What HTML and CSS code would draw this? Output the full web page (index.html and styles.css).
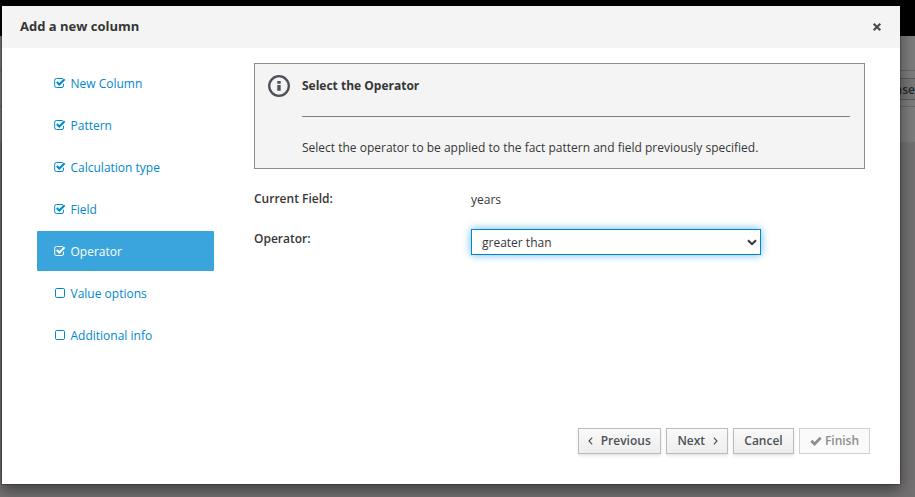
FILE: index.html
```html
<!DOCTYPE html>
<html lang="en">
<head>
<meta charset="utf-8">
<title>Add a new column</title>
<link rel="stylesheet" href="styles.css">
</head>
<body>
<svg class="sprite" aria-hidden="true">
  <symbol id="box-checked" viewBox="0 0 12 12"><path d="M9.500 6.700v2.100q0 1.700-1.500 1.700H2.500Q.7 10.500.7 8.800V3.200Q.7 1.500 2.500 1.500h5.500q.5 0 1 .200" fill="none" stroke="currentColor" stroke-width="1"/><path d="M2.800 5 5.300 7.500 10.600 2.300" fill="none" stroke="currentColor" stroke-width="2"/></symbol>
  <symbol id="box-empty" viewBox="0 0 12 12"><rect x="1.500" y="1.500" width="9" height="9" rx="1.300" fill="none" stroke="currentColor"/></symbol>
</svg>
<div class="page">
  <div class="masthead"></div>
  <div class="toolbar"><div class="toolbar-row"><span class="toolbar-button">nse</span></div></div>
</div>
<section class="modal" role="dialog">
  <header class="modal-header">
    <h4>Add a new column</h4>
    <svg class="close" viewBox="0 0 10 10"><path d="M1.700 1.700 8.300 8.300M8.300 1.700 1.700 8.300" stroke="currentColor" stroke-width="2.200"/></svg>
  </header>
  <div class="modal-body">
    <nav class="steps">
      <a><svg><use href="#box-checked"/></svg>New Column</a>
      <a><svg><use href="#box-checked"/></svg>Pattern</a>
      <a><svg><use href="#box-checked"/></svg>Calculation type</a>
      <a><svg><use href="#box-checked"/></svg>Field</a>
      <a class="active"><svg><use href="#box-checked"/></svg>Operator</a>
      <a><svg><use href="#box-empty"/></svg>Value options</a>
      <a><svg><use href="#box-empty"/></svg>Additional info</a>
    </nav>
    <main class="content">
      <div class="info">
        <svg class="info-icon" viewBox="0 0 22 22"><circle cx="11" cy="11" r="9.800" fill="none" stroke="currentColor" stroke-width="2.300"/><path d="M9.300 6h3.400v2.800H9.300zM9.300 10h3.400v5.800H9.300z" fill="currentColor"/></svg>
        <div class="info-text">
          <strong>Select the Operator</strong>
          <hr>
          <p>Select the operator to be applied to the fact pattern and field previously specified.</p>
        </div>
      </div>
      <div class="row current"><label>Current Field:</label><span>years</span></div>
      <div class="row"><label>Operator:</label>
        <div class="select"><span>greater than</span><svg viewBox="0 0 10 7"><path d="M1 1.300 5 5.200 9 1.300" fill="none" stroke="currentColor" stroke-width="2"/></svg></div>
      </div>
    </main>
  </div>
  <footer class="modal-footer">
    <button class="previous"><svg class="angle" viewBox="0 0 5 8"><path d="M4.200.7 1 4 4.200 7.300" fill="none" stroke="currentColor" stroke-width="1.200"/></svg>Previous</button>
    <button class="next">Next<svg class="angle" viewBox="0 0 5 8"><path d="M.8.7 4 4 .8 7.300" fill="none" stroke="currentColor" stroke-width="1.200"/></svg></button>
    <button class="cancel">Cancel</button>
    <button class="finish" disabled><svg class="check" viewBox="0 0 12 10"><path d="M1.300 4.800 4.500 8 10.700 1.700" fill="none" stroke="currentColor" stroke-width="2.700"/></svg>Finish</button>
  </footer>
</section>
</body>
</html>
```
FILE: styles.css
```css
* { box-sizing: border-box; }
body {
  margin: 0;
  height: 497px;
  overflow: hidden;
  background: #737171;
  color: #363636;
  font: 12px/20px "Open Sans", sans-serif;
}
.sprite { position: absolute; width: 0; height: 0; }
.masthead { height: 36px; background: #000; }
.toolbar { height: 106px; padding-top: 34px; background: #7d7d7d; }
.toolbar-row {
  display: flex;
  justify-content: flex-end;
  height: 37px;
  padding-top: 7px;
  border-top: 1px solid #686868;
  border-bottom: 1px solid #686868;
}
.toolbar-button {
  height: 22px;
  padding-left: 12px;
  border: 1px solid #5b5b5b;
  border-right: 0;
  background: #777;
  color: #262829;
  font-weight: 600;
  line-height: 22px;
}
.modal {
  position: absolute;
  left: 2px;
  top: 6px;
  width: 898px;
  height: 478px;
  display: flex;
  flex-direction: column;
  background: #fff;
  box-shadow: 0 0 0 1px rgba(0, 0, 0, .2), 0 5px 15px rgba(0, 0, 0, .5);
}
.modal-header {
  display: flex;
  align-items: center;
  justify-content: space-between;
  height: 42px;
  padding: 0 18px;
  background: #f4f4f4;
}
h4 { margin: 0; padding-bottom: 2px; font-size: 13px; font-weight: 700; }
.close { width: 10px; height: 10px; color: #4d4d4d; }
.modal-body { display: flex; flex: 1; padding: 15px 35px 0; }
.steps { display: flex; flex-direction: column; gap: 2px; width: 177px; margin-right: 40px; }
.steps a {
  display: flex;
  align-items: center;
  height: 40px;
  padding: 2px 0 0 17px;
  border-radius: 1px;
  color: #0088ce;
}
.steps svg { width: 12px; height: 12px; margin: 0 4.500px 2px 0; }
.steps .active { background: #39a5dc; color: #fff; }
.content { width: 611px; }
.info {
  display: flex;
  height: 106px;
  padding: 11px 14px 0 13px;
  border: 1px solid #8b8d8f;
  background: #f4f4f4;
}
.info-icon { width: 22px; height: 22px; margin-right: 12px; color: #4d5258; }
.info-text { flex: 1; padding-top: 1px; }
.info strong { display: block; font-weight: 700; }
hr { height: 1px; margin: 20px 0 21px; border: 0; background: #7d7d7d; }
p { margin: 0; }
.row { display: flex; }
.row label { width: 217px; font-weight: 600; }
.current { height: 40px; margin-top: 20px; }
.current span { padding-top: 1px; }
.select {
  display: flex;
  align-items: center;
  justify-content: space-between;
  width: 290px;
  height: 26px;
  padding: 0 3px 0 10px;
  border: 1px solid #0088ce;
  box-shadow: 0 0 8px rgba(0, 136, 206, .6);
}
.select span { padding-top: 2px; }
.select svg { width: 10px; height: 7px; }
.modal-footer { display: flex; justify-content: flex-end; gap: 5px; padding: 0 30px 30px; }
button {
  display: flex;
  align-items: center;
  justify-content: center;
  height: 26px;
  padding: 0 0 1px;
  border: 1px solid #bbb;
  background: linear-gradient(#fafafa, #ededed);
  box-shadow: 0 2px 3px rgba(3, 3, 3, .1);
  color: #4d5258;
  font: 600 12px/20px "Open Sans", sans-serif;
}
.angle { width: 5px; height: 8px; margin-top: 1px; }
.previous { width: 83px; }
.previous svg { margin-right: 7.500px; }
.next { width: 62px; padding-left: 1px; }
.next svg { margin-left: 7.500px; }
.cancel { width: 61px; }
.finish { width: 71px; border-color: #d1d1d1; background: #fafafa; box-shadow: none; color: #8b8d8f; }
.check { width: 12px; height: 10px; margin-right: 3px; }
```
